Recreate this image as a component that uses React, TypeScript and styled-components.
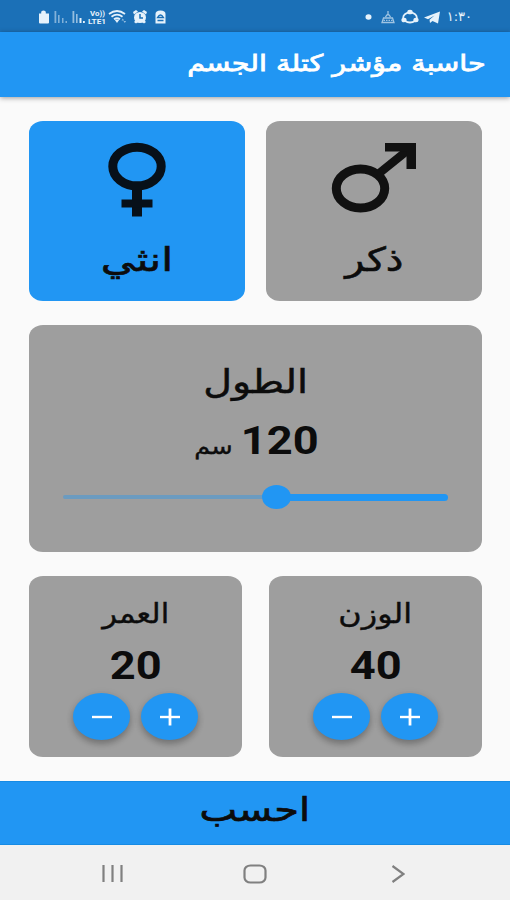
import React, { useState } from "react";
import styled, { createGlobalStyle } from "styled-components";

const BLUE = "#2196f3";
const GREY = "#9e9e9e";

const GlobalStyle = createGlobalStyle`
  * { box-sizing: border-box; }
  body { margin: 0; background: #fafafa; }
  button { border: 0; padding: 0; font: inherit; color: inherit; cursor: pointer; }
`;

const Screen = styled.div`
  width: 510px;
  height: 900px;
  display: flex;
  flex-direction: column;
  background: #fafafa;
  color: #0c0c0c;
  font-family: "DejaVu Sans", sans-serif;
  overflow: hidden;
`;

const StatusBar = styled.header`
  height: 32px;
  flex: none;
  display: flex;
  align-items: center;
  justify-content: space-between;
  padding: 1px 38px 0 37px;
  background: #1b70b7;
  color: #e6f2fb;
`;

const StatusGroup = styled.div<{ $gap: number }>`
  display: flex;
  align-items: center;
  gap: ${(p) => p.$gap}px;
  svg { display: block; }
`;

const Clock = styled.span`
  width: 24px;
  font-size: 13px;
  line-height: 16px;
  white-space: nowrap;
`;

const AppBar = styled.div`
  height: 65px;
  flex: none;
  display: flex;
  align-items: center;
  padding: 0 24px 2px;
  background: ${BLUE};
  color: #fff;
  box-shadow: 0 1px 5px rgba(0, 0, 0, 0.38);
  z-index: 1;
`;

const Text = styled.span<{
  $size: number;
  $stretch?: number;
  $bold?: boolean;
  $stroke?: number;
  $origin?: string;
}>`
  display: inline-block;
  font-size: ${(p) => p.$size}px;
  font-weight: ${(p) => (p.$bold ? 700 : 400)};
  line-height: 1;
  white-space: nowrap;
  -webkit-text-stroke: ${(p) => p.$stroke ?? 0}px currentColor;
  transform: scaleX(${(p) => p.$stretch ?? 1});
  transform-origin: ${(p) => p.$origin ?? "center"};
`;

const Digits = styled(Text)`
  font-family: Roboto, sans-serif;
`;

const Body = styled.main`
  flex: 1;
  display: flex;
  flex-direction: column;
  gap: 24px;
  padding: 24px 28px 24px 29px;
`;

const CardRow = styled.div<{ $gap: number; $height: number }>`
  display: flex;
  gap: ${(p) => p.$gap}px;
  height: ${(p) => p.$height}px;
`;

const Card = styled.section<{ $selected?: boolean; $top: number }>`
  flex: 1;
  display: flex;
  flex-direction: column;
  align-items: center;
  padding-top: ${(p) => p.$top}px;
  border-radius: 14px / 12px;
  background: ${(p) => (p.$selected ? BLUE : GREY)};
  svg { display: block; flex: none; }
`;

const Line = styled.div<{ $height: number; $drop?: number }>`
  height: ${(p) => p.$height}px;
  padding-top: ${(p) => p.$drop ?? 0}px;
  flex: none;
  display: flex;
  align-items: center;
  justify-content: center;
`;

const Reading = styled(Line)`
  align-items: baseline;
  gap: 17px;
  margin-right: 2px;
`;

const Track = styled.div`
  direction: ltr;
  width: 385px;
  height: 24px;
  margin-top: 13px;
  display: flex;
  align-items: center;
`;

const Rest = styled.div`
  width: 199px;
  height: 4px;
  border-radius: 2px 0 0 2px;
  background: #6b9bc0;
`;

const Thumb = styled.div`
  width: 29px;
  height: 24px;
  border-radius: 50%;
  background: ${BLUE};
`;

const Filled = styled.div`
  flex: 1;
  height: 7px;
  margin-left: -2px;
  border-radius: 0 4px 4px 0;
  background: ${BLUE};
`;

const Buttons = styled.div`
  display: flex;
  gap: 11px;
`;

const RoundButton = styled.button`
  width: 57px;
  height: 47px;
  border-radius: 50%;
  background: ${BLUE};
  display: flex;
  align-items: center;
  justify-content: center;
  box-shadow: 0 4px 6px rgba(0, 0, 0, 0.24), 0 1px 9px rgba(0, 0, 0, 0.08);
`;

const Calculate = styled.button`
  height: 64px;
  flex: none;
  display: flex;
  align-items: center;
  justify-content: center;
  padding-bottom: 8px;
  background: ${BLUE};
  border-top: 1px solid #168be4;
  border-bottom: 1px solid #168be4;
`;

const NavBar = styled.nav`
  direction: ltr;
  height: 55px;
  flex: none;
  display: flex;
  align-items: center;
  justify-content: space-between;
  padding: 2px 105px 0 101px;
  background: #f1f1f1;
  svg { display: block; }
`;

const HomeIcon = styled.svg`
  margin-right: 4px;
`;

const navStroke = { fill: "none", stroke: "#808080", strokeWidth: 2.2 };

const networkLabel = {
  direction: "ltr" as const,
  fontWeight: 700,
  fontFamily: "Roboto",
  lengthAdjust: "spacingAndGlyphs" as const,
};

function SystemIcons() {
  return (
    <StatusGroup $gap={0}>
      <svg width="132" height="20" viewBox="0 0 132 20" fill="currentColor">
        <path d="M2 6.500h2.200V5q0-1.500 2.300-1.500T8.800 5v1.500H12V15.500q0 1-1 1H3q-1 0-1-1z" />
        <g opacity=".5">
          <rect x="17.500" y="4" width="1.800" height="12" />
          <rect x="21" y="8" width="1.600" height="8" />
          <rect x="25" y="11" width="1.500" height="5" />
          <rect x="28.500" y="14" width="1.500" height="2" />
        </g>
        <g opacity=".6">
          <rect x="35.500" y="4" width="1.800" height="12" />
          <rect x="39" y="7" width="1.600" height="9" />
        </g>
        <rect x="42.500" y="11" width="2" height="5" />
        <rect x="46" y="14" width="1.800" height="2" />
        <text x="53" y="9" fontSize="7" textLength="15" {...networkLabel}>Vo))</text>
        <text x="51" y="16.500" fontSize="8" textLength="18" {...networkLabel}>LTE1</text>
        <g fill="none" stroke="currentColor" strokeWidth="1.800">
          <path d="M72 7q8-6 16 0" />
          <path d="M74.500 9.700q5.500-4 11 0" />
          <path d="M77 12.200q3-2.300 6 0" />
        </g>
        <path d="M77.500 12.500h5L80 16z" />
        <path d="M84.500 13.500l1.300-2 1.300 2zM86.500 14l1.300 2 1.300-2z" opacity=".6" />
        <ellipse cx="103" cy="10.500" rx="6" ry="5.500" />
        <path d="M96 5l3-2 2 1.500-4 3zM110 5l-3-2-2 1.500 4 3zM97 15l2-2 2 2-2 1.500zM109 15l-2-2-2 2 2 1.500z" />
        <path d="M103 7v4h3" fill="none" stroke="#1b70b7" strokeWidth="1.500" />
        <path d="M118.500 7q0-3.500 5-3.500t5 3.500v9.500h-10z" />
        <path d="M120.500 10.500q3-5 6 0zM120.500 13.500h6" fill="none" stroke="#1b70b7" strokeWidth="1.300" />
      </svg>
    </StatusGroup>
  );
}

function AppIcons() {
  return (
    <svg width="78" height="20" viewBox="0 0 78 20" fill="currentColor">
      <ellipse cx="5.500" cy="10" rx="3" ry="2.700" />
      <g fill="none" stroke="currentColor" strokeWidth="1.300" opacity=".65">
        <path d="M25 4v3M22.500 10q2.500-5 5 0M20.500 11h9l1.500 4.500H19z" />
        <path d="M20.500 13.300h9" strokeDasharray="1.500 1" />
      </g>
      <ellipse cx="47" cy="10.500" rx="6.800" ry="5" fill="none" stroke="currentColor" strokeWidth="1.800" />
      <ellipse cx="47" cy="5" rx="2.700" ry="2.300" />
      <ellipse cx="41" cy="13" rx="2.600" ry="2.300" />
      <ellipse cx="53" cy="13" rx="2.600" ry="2.300" />
      <path d="M61 10.500L77 4.500 75 16.500 69.500 14 67 16 66.500 12.800 71.500 8.500 65 12.200z" />
    </svg>
  );
}

function FemaleIcon() {
  return (
    <svg width="60" height="76" viewBox="0 0 60 76">
      <g fill="none" stroke="#071019">
        <ellipse cx="30" cy="24.500" rx="24.200" ry="19.300" strokeWidth="9" />
        <path d="M30 44v30.500" strokeWidth="10" />
        <path d="M14.500 61.500h31" strokeWidth="8" />
      </g>
    </svg>
  );
}

function MaleIcon() {
  return (
    <svg width="86" height="76" viewBox="0 0 86 76">
      <g fill="none" stroke="#111">
        <ellipse cx="29.500" cy="46.500" rx="24.200" ry="19.500" strokeWidth="9" />
        <path d="M46 33L77 8" strokeWidth="8.500" />
      </g>
      <path d="M54 1h31v26H75.500V9.500H54z" fill="#111" />
    </svg>
  );
}

function Counter({ label, start, stretch }: { label: string; start: number; stretch: number }) {
  const [value, setValue] = useState(start);
  return (
    <Card $top={15}>
      <Line $height={44}>
        <Text $size={27} $stretch={stretch} $stroke={0.4}>{label}</Text>
      </Line>
      <Line $height={58} $drop={4}>
        <Digits $size={38} $stretch={1.19} $bold>{value}</Digits>
      </Line>
      <Buttons>
        <RoundButton aria-label="+" onClick={() => setValue(value + 1)}>
          <svg width="22" height="18" viewBox="0 0 22 18" stroke="#fff" fill="none">
            <path d="M1 9h20" strokeWidth="2.400" />
            <path d="M11 .5v17" strokeWidth="2.800" />
          </svg>
        </RoundButton>
        <RoundButton aria-label="-" onClick={() => setValue(value - 1)}>
          <svg width="22" height="18" viewBox="0 0 22 18" stroke="#fff">
            <path d="M1 9h20" strokeWidth="2.400" />
          </svg>
        </RoundButton>
      </Buttons>
    </Card>
  );
}

export default function App() {
  const [female, setFemale] = useState(true);
  return (
    <Screen dir="rtl">
      <GlobalStyle />
      <StatusBar>
        <StatusGroup $gap={7}>
          <Clock>١:٣٠</Clock>
          <AppIcons />
        </StatusGroup>
        <SystemIcons />
      </StatusBar>
      <AppBar>
        <Text $size={23} $stroke={0.8} $stretch={1.245} $origin="right center">حاسبة مؤشر كتلة الجسم</Text>
      </AppBar>
      <Body>
        <CardRow $gap={21} $height={180}>
          <Card $selected={!female} $top={21} onClick={() => setFemale(false)}>
            <MaleIcon />
            <Line $height={83}>
              <Text $size={33} $stretch={1.2} $stroke={0.6}>ذكر</Text>
            </Line>
          </Card>
          <Card $selected={female} $top={21} onClick={() => setFemale(true)}>
            <FemaleIcon />
            <Line $height={83}>
              <Text $size={33} $stretch={1.3} $stroke={0.6}>انثي</Text>
            </Line>
          </Card>
        </CardRow>
        <CardRow $gap={0} $height={227}>
          <Card $top={28}>
            <Line $height={56}>
              <Text $size={33} $stretch={1.2} $stroke={0.5}>الطول</Text>
            </Line>
            <Line $height={63}>
              <Reading $height={38}>
                <Digits $size={38} $stretch={1.19} $bold>120</Digits>
                <Text $size={22} $stretch={1.16} $stroke={0.4}>سم</Text>
              </Reading>
            </Line>
            <Track>
              <Rest />
              <Thumb />
              <Filled />
            </Track>
          </Card>
        </CardRow>
        <CardRow $gap={27} $height={181}>
          <Counter label="الوزن" start={40} stretch={1.18} />
          <Counter label="العمر" start={20} stretch={1.13} />
        </CardRow>
      </Body>
      <Calculate>
        <Text $size={33} $stretch={1.21} $stroke={0.7}>احسب</Text>
      </Calculate>
      <NavBar>
        <svg width="22" height="18" viewBox="0 0 22 18" {...navStroke}>
          <path d="M2.500 0v17M11.500 0v17M20.500 0v17" />
        </svg>
        <HomeIcon width="24" height="20" viewBox="0 0 24 20" {...navStroke}>
          <rect x="1.500" y="1.500" width="21" height="17" rx="6" ry="5" />
        </HomeIcon>
        <svg width="14" height="18" viewBox="0 0 14 18" {...navStroke}>
          <path d="M1.500 1l11 8-11 8" />
        </svg>
      </NavBar>
    </Screen>
  );
}
